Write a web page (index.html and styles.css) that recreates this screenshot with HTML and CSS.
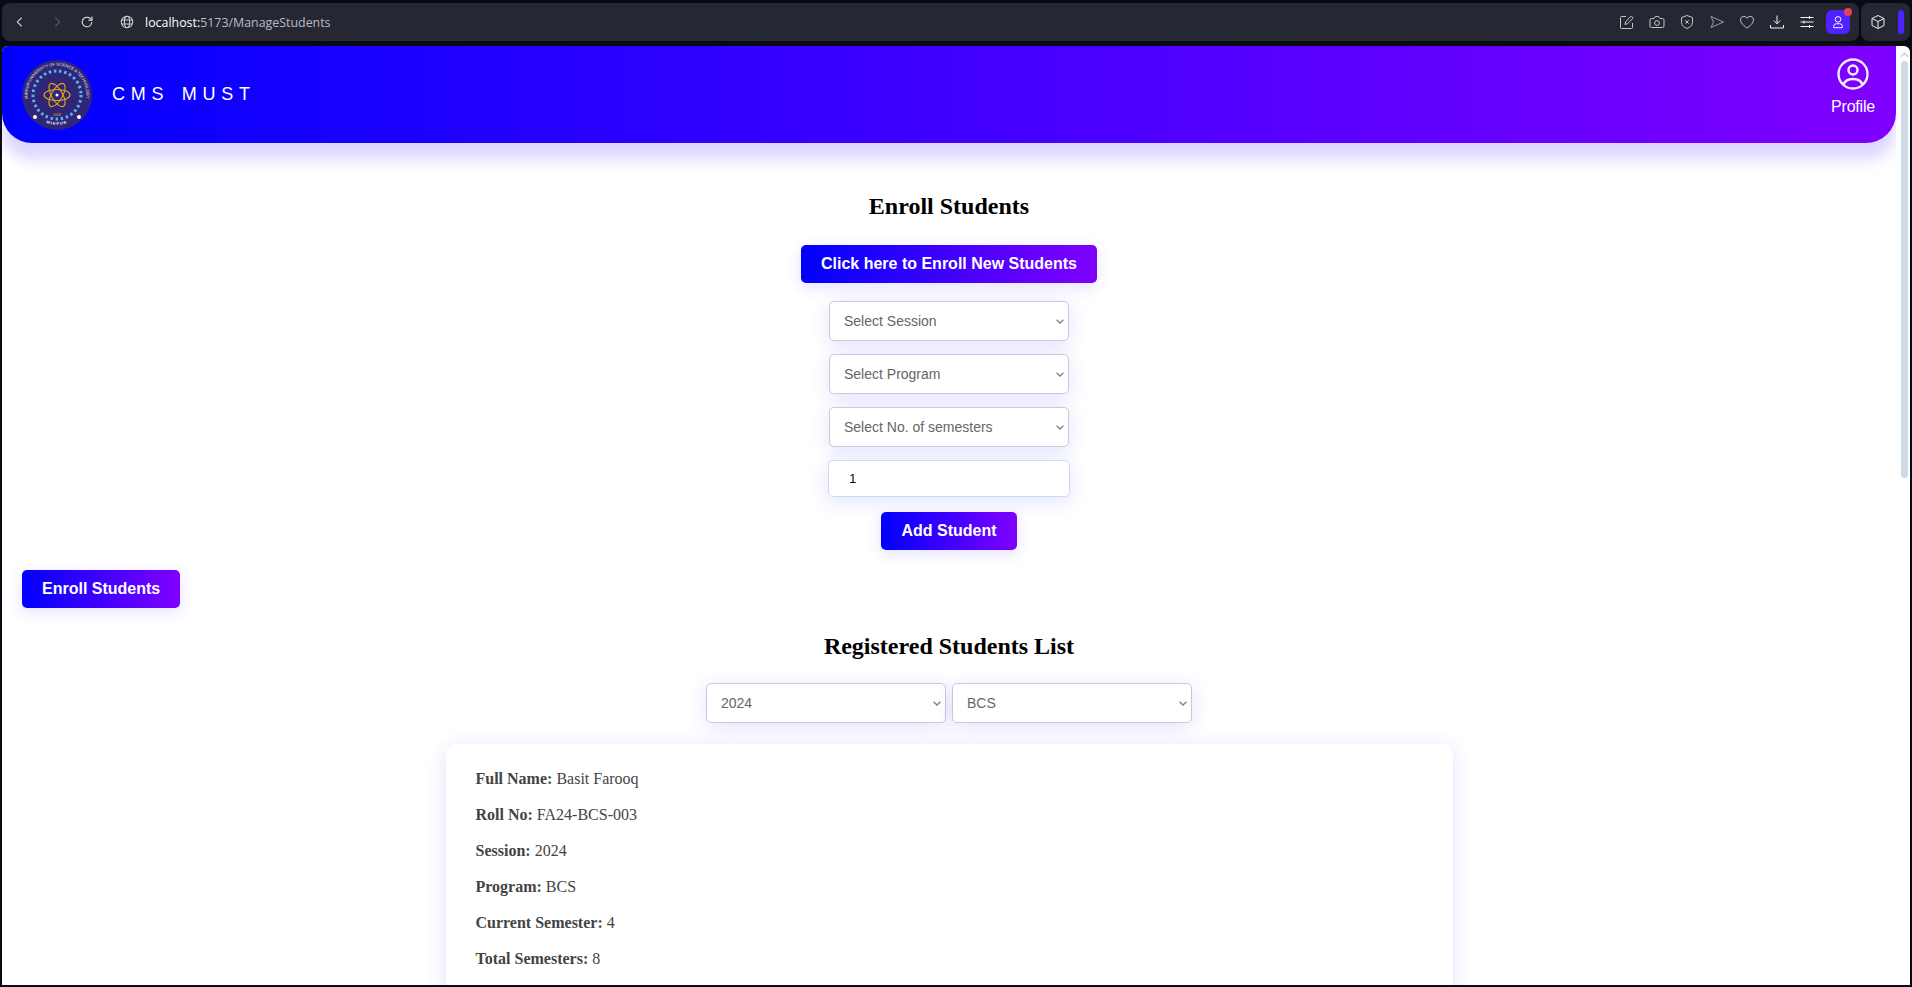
FILE: index.html
```html
<!DOCTYPE html>
<html lang="en">
<head>
<meta charset="utf-8">
<title>CMS MUST</title>
<link rel="stylesheet" href="styles.css">
</head>
<body>
<div class="chrome">
  <div class="toolbar">
    <svg class="nav-icon back" viewBox="0 0 16 16"><path d="M10 3 5 8l5 5"/></svg>
    <svg class="nav-icon forward" viewBox="0 0 16 16"><path d="M6 3l5 5-5 5"/></svg>
    <svg class="nav-icon reload" viewBox="0 0 16 16"><path d="M13.500 8a5.500 5.500 0 1 1-1.700-4L13.500 5.800"/><path d="M13.700 1.800v4.200H9.600"/></svg>
    <svg class="nav-icon globe" viewBox="0 0 16 16"><circle cx="8" cy="8" r="6.500"/><ellipse cx="8" cy="8" rx="3" ry="6.500"/><path d="M1.800 5.800h12.400M1.800 10.200h12.400"/></svg>
    <div class="url"><span class="host">localhost:</span>5173/ManageStudents</div>
    <div class="actions">
      <svg class="tool" viewBox="0 0 16 16"><path d="M7 2.500H2.500a1 1 0 0 0-1 1v10a1 1 0 0 0 1 1h10a1 1 0 0 0 1-1V9"/><path d="M6 10.500l.6-2.600 4.600-5a1.400 1.400 0 0 1 2.200 1.900l-4.700 4.800z"/></svg>
      <svg class="tool" viewBox="0 0 16 16"><path d="M2.500 4.500h2.600l1.200-2h3.400l1.200 2h2.600a1.500 1.500 0 0 1 1.500 1.500v6a1.500 1.500 0 0 1-1.500 1.500h-11A1.500 1.500 0 0 1 1 12V6a1.500 1.500 0 0 1 1.500-1.500z"/><circle cx="8" cy="9" r="2.400"/></svg>
      <svg class="tool" viewBox="0 0 16 16"><path d="M8 1.500l5.500 2v4.800c0 3-2.300 5-5.500 6.200-3.200-1.200-5.500-3.200-5.500-6.200V3.500z"/><path d="M6.300 6.300l3.400 3.400M9.700 6.300l-3.400 3.400"/></svg>
      <svg class="tool dim" viewBox="0 0 16 16"><path d="M2 2.500 14.500 8 2 13.500 4.500 8z"/></svg>
      <svg class="tool" viewBox="0 0 16 16"><path d="M8 14S1.500 10.200 1.500 5.700A3.400 3.400 0 0 1 8 4.300a3.400 3.400 0 0 1 6.500 1.400C14.500 10.200 8 14 8 14z"/></svg>
      <svg class="tool bright" viewBox="0 0 16 16"><path d="M8 1.500v8M4.800 6.500 8 9.800l3.200-3.300M1.500 11v3h13v-3"/></svg>
      <svg class="tool bright" viewBox="0 0 16 16"><path d="M1.500 3.500h13M1.500 8h13M1.500 12.500h13"/><path d="M10.500 2v3M5 6.500v3M10.500 11v3"/></svg>
      <div class="avatar">
        <svg class="avatar-icon" viewBox="0 0 16 16"><circle cx="8" cy="5" r="3.200"/><path d="M3 14.500v-1.500a3 3 0 0 1 3-3h4a3 3 0 0 1 3 3v1.500z"/></svg>
        <span class="dot"></span>
      </div>
    </div>
  </div>
  <div class="sidebox">
    <svg class="tool bright" viewBox="0 0 16 16"><path d="M8 1.500l6 3v7l-6 3-6-3v-7z"/><path d="M2 4.500l6 3 6-3M8 7.500v7"/></svg>
    <span class="side-bar"></span>
  </div>
</div>

<div class="page">
  <main class="content">
    <header class="site-header">
      <div class="brand">
        <svg class="logo" viewBox="0 0 70 70">
          <defs>
            <path id="arc-top" d="M8 47A29.500 29.500 0 1 1 62 47"/>
            <path id="arc-bottom" d="M22 62A30 30 0 0 0 48 62"/>
          </defs>
          <circle cx="35" cy="35" r="35" fill="#2f2678"/>
          <circle cx="35" cy="35" r="24" fill="none" stroke="#5cb4e8" stroke-width="3" stroke-dasharray="2.500 2.700"/>
          <text class="logo-ring"><textPath href="#arc-top" startOffset="50%" text-anchor="middle">MIRPUR UNIVERSITY OF SCIENCE &amp; TECHNOLOGY</textPath></text>
          <text class="logo-ring bold"><textPath href="#arc-bottom" startOffset="50%" text-anchor="middle">MIRPUR</textPath></text>
          <g fill="none" stroke="#e5a812" stroke-width="1.100">
            <ellipse cx="35" cy="35" rx="13" ry="5.500"/>
            <ellipse cx="35" cy="35" rx="13" ry="5.500" transform="rotate(60 35 35)"/>
            <ellipse cx="35" cy="35" rx="13" ry="5.500" transform="rotate(120 35 35)"/>
          </g>
          <circle cx="35" cy="35" r="1.500" fill="#fff"/>
          <circle cx="13" cy="57" r="2" fill="#fff"/>
          <circle cx="57" cy="57" r="2" fill="#fff"/>
          <text class="logo-year" x="35" y="56" text-anchor="middle">2008</text>
        </svg>
        <span class="brand-name">CMS MUST</span>
      </div>
      <a class="profile" href="#">
        <svg class="profile-icon" viewBox="0 0 32 32"><circle cx="16" cy="16" r="14.500"/><circle cx="16" cy="12" r="4.500"/><path d="M6.500 26.500c1.500-4 5-5.500 9.500-5.500s8 1.500 9.500 5.500"/></svg>
        <span class="profile-label">Profile</span>
      </a>
    </header>

    <section class="enroll">
      <h2 class="title">Enroll Students</h2>
      <button class="btn enroll-new">Click here to Enroll New Students</button>
      <select class="field first"><option>Select Session</option></select>
      <select class="field"><option>Select Program</option></select>
      <select class="field"><option>Select No. of semesters</option></select>
      <input class="count" type="text" value="1">
      <button class="btn add">Add Student</button>
    </section>

    <div class="toggle-row"><button class="btn">Enroll Students</button></div>

    <section class="registered">
      <h2 class="title">Registered Students List</h2>
      <div class="filters">
        <select class="field"><option>2024</option></select>
        <select class="field"><option>BCS</option></select>
      </div>
      <article class="card">
        <p><strong>Full Name:</strong> Basit Farooq</p>
        <p><strong>Roll No:</strong> FA24-BCS-003</p>
        <p><strong>Session:</strong> 2024</p>
        <p><strong>Program:</strong> BCS</p>
        <p><strong>Current Semester:</strong> 4</p>
        <p><strong>Total Semesters:</strong> 8</p>
      </article>
    </section>
  </main>
  <div class="scrollbar">
    <svg class="scroll-arrow" viewBox="0 0 10 6"><path d="M1 5l4-4 4 4"/></svg>
    <div class="thumb"></div>
  </div>
</div>
</body>
</html>
```

FILE: styles.css
```css
* { box-sizing: border-box; }
html, body { height: 100%; }
body {
  margin: 0;
  height: 987px;
  overflow: hidden;
  background: #080a14;
  padding: 3px 2px 2px;
  display: flex;
  flex-direction: column;
  font-family: "Liberation Serif", serif;
}
.chrome {
  display: flex;
  gap: 2px;
  height: 38px;
  margin-bottom: 5px;
  flex: none;
}
.toolbar {
  flex: 1;
  background: #252833;
  border-radius: 8px;
  display: flex;
  align-items: center;
  padding-left: 11px;
}
.sidebox {
  width: 49px;
  background: #252833;
  border-radius: 8px;
  display: flex;
  align-items: center;
  padding-left: 9px;
  gap: 12px;
}
.side-bar { width: 6px; height: 24px; border-radius: 3px; background: #4f22ff; }
.nav-icon { width: 14px; height: 14px; fill: none; stroke: #e4e5e8; stroke-width: 1.200; }
.nav-icon.forward { margin-left: 23px; stroke: #5d606a; }
.nav-icon.reload { margin-left: 16px; }
.nav-icon.globe { margin-left: 26px; stroke: #c9cbd0; }
.url {
  margin-left: 11px;
  font: 12.400px "Open Sans", sans-serif;
  color: #b9bbc2;
}
.host { color: #fff; font-weight: 500; }
.actions {
  margin-left: auto;
  margin-right: 9px;
  display: flex;
  align-items: center;
  gap: 14px;
}
.tool { width: 16px; height: 16px; fill: none; stroke: #c2c4ca; stroke-width: 1; }
.tool.dim { stroke: #9b9da4; }
.tool.bright { stroke: #f2f3f5; }
.avatar {
  position: relative;
  width: 24px;
  height: 24px;
  margin-left: -3px;
  border-radius: 6px;
  background: #4f22ff;
  display: flex;
  align-items: center;
  justify-content: center;
}
.avatar-icon { width: 14px; height: 14px; fill: none; stroke: #fff; stroke-width: 1.100; }
.dot {
  position: absolute;
  top: -2px;
  right: -2px;
  width: 8px;
  height: 8px;
  border-radius: 50%;
  background: #e2434f;
}

.page {
  flex: 1;
  min-height: 0;
  display: flex;
  background: #fff;
  border-radius: 6px 6px 0 0;
  overflow: hidden;
}
.content { flex: 1; min-width: 0; overflow: hidden; }
.scrollbar { width: 14px; flex: none; display: flex; flex-direction: column; align-items: center; padding-top: 6px; }
.scroll-arrow { width: 9px; height: 6px; fill: none; stroke: #c9d3db; stroke-width: 1.800; margin-left: 2px; }
.thumb { width: 7px; height: 417px; margin: 3px 0 0 2px; background: #cfd9e1; border-radius: 3.500px; }

.site-header {
  height: 97px;
  display: flex;
  align-items: flex-start;
  justify-content: space-between;
  padding: 12px 21px 0 20px;
  background: linear-gradient(90deg, #0000ff, #8000ff);
  border-radius: 0 0 30px 30px;
  box-shadow: 0 17px 14px rgba(60, 40, 255, 0.18);
  color: #fff;
}
.brand { display: flex; align-items: center; gap: 20px; margin-top: 2px; }
.logo { width: 70px; height: 70px; display: block; }
.logo-ring { font: 4px "Liberation Sans", sans-serif; fill: #eee; }
.logo-ring.bold { font-weight: bold; letter-spacing: 1px; }
.logo-year { font: 3.500px "Liberation Sans", sans-serif; fill: #e5a812; }
.brand-name {
  font: 18px "Liberation Sans", sans-serif;
  letter-spacing: 5.700px;
  word-spacing: 2px;
  margin-top: -2px;
}
.profile {
  display: flex;
  flex-direction: column;
  align-items: center;
  gap: 8px;
  color: #fff;
  text-decoration: none;
}
.profile-icon { width: 32px; height: 32px; fill: none; stroke: #f4eefc; stroke-width: 2.400; }
.profile-label {
  font: 16px "Liberation Sans", sans-serif;
  letter-spacing: -0.200px;
  border-bottom: 1px solid #5a1ab0;
}

.enroll { display: flex; flex-direction: column; align-items: center; margin-top: 49px; }
.title {
  margin: 0;
  font: bold 24px/28px "Liberation Serif", serif;
  color: #000;
  text-align: center;
}
.btn {
  height: 38px;
  padding: 0 20px;
  border: 0;
  border-radius: 5px;
  background: linear-gradient(90deg, #0000ff, #8000ff);
  color: #fff;
  font: bold 16px "Liberation Sans", sans-serif;
  box-shadow: 0 4px 15px rgba(60, 40, 255, 0.14);
}
.enroll-new { margin-top: 25px; }
.field {
  appearance: none;
  width: 240px;
  height: 40px;
  padding: 0 24px 0 14px;
  border: 1px solid #c9c9da;
  border-radius: 5px;
  background: #fff url("data:image/svg+xml,%3Csvg xmlns='http://www.w3.org/2000/svg' width='8' height='5' viewBox='0 0 8 5'%3E%3Cpath d='M.6.8 4 4 7.400.8' fill='none' stroke='%23808080' stroke-width='1.300'/%3E%3C/svg%3E") no-repeat right 4px center;
  color: #666;
  font: 14px "Liberation Sans", sans-serif;
  box-shadow: 0 4px 20px rgba(60, 40, 255, 0.14);
}
.enroll .field { margin-top: 13px; }
.enroll .field.first { margin-top: 18px; }
.count {
  width: 242px;
  height: 37px;
  margin-top: 13px;
  padding: 0 20px;
  border: 1px solid #c9def0;
  border-radius: 5px;
  color: #111;
  font: 13.330px "Liberation Sans", sans-serif;
  box-shadow: 0 4px 20px rgba(60, 40, 255, 0.14);
}
.add { margin-top: 15px; }
.toggle-row { padding: 20px 20px 0; }
.registered { display: flex; flex-direction: column; align-items: center; margin-top: 24px; }
.filters { display: flex; gap: 6px; margin-top: 23px; }
.card {
  width: 1007px;
  margin-top: 21px;
  padding: 26px 30px;
  background: #fff;
  border-radius: 10px;
  box-shadow: 0 4px 20px rgba(60, 40, 255, 0.15);
  color: #444;
  font-size: 16px;
  line-height: 18px;
}
.card p { margin: 0 0 18px; }
```
